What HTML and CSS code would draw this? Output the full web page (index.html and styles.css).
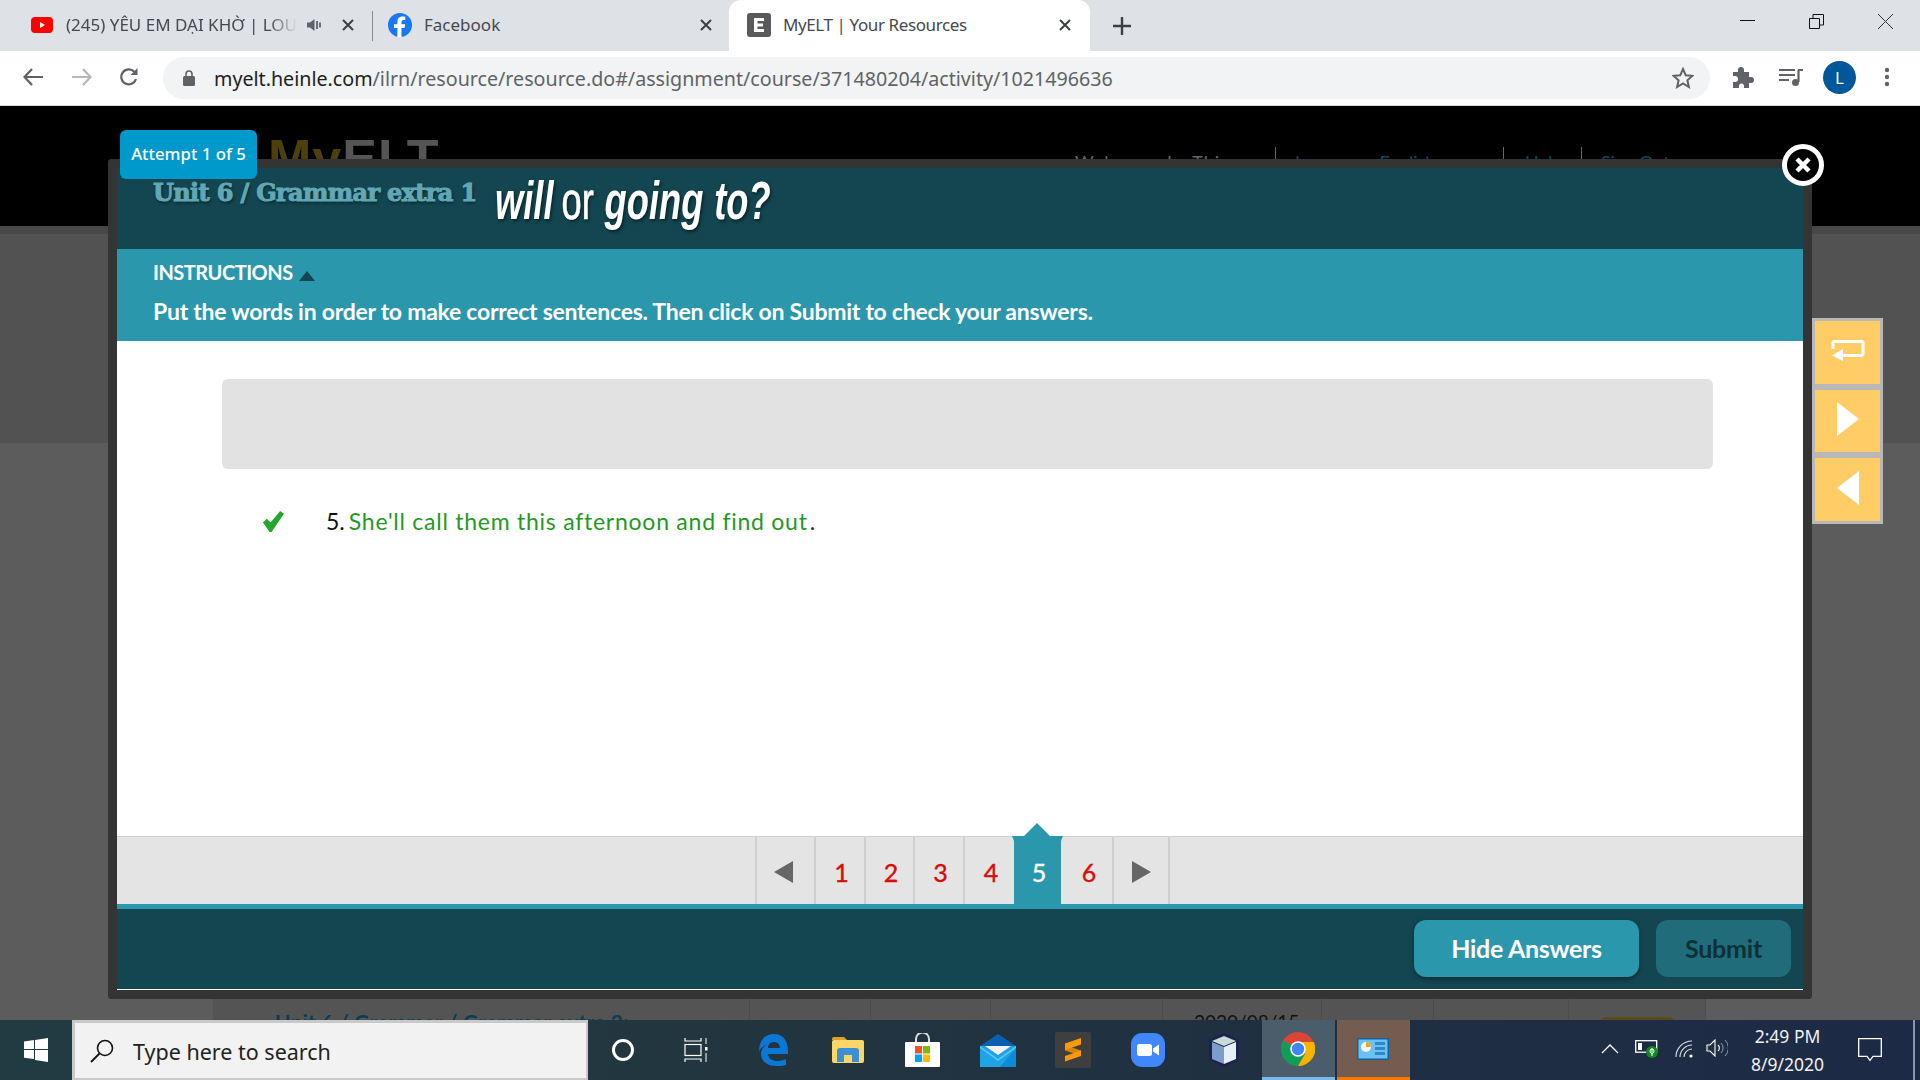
FILE: index.html
```html
<!DOCTYPE html>
<html lang="en">
<head>
<meta charset="utf-8">
<title>MyELT | Your Resources</title>
<link rel="stylesheet" href="styles.css">
</head>
<body>
<div class="tabstrip">
  <div class="tab tab-yt">
    <svg class="ic-yt" viewBox="0 0 22 16"><rect width="22" height="16" rx="4" fill="#f00"/><path d="M9 5l5 3-5 3z" fill="#fff"/></svg>
    <span class="tab-title fade">(245) YÊU EM DẠI KHỜ | LOU</span>
    <svg class="ic-speaker" viewBox="0 0 15 14"><path d="M0 4.5h3L7.500 1v12L3 9.500H0z" fill="#5f6368"/><path d="M10 3v8M13 4.500v5" stroke="#5f6368" stroke-width="1.800" fill="none"/></svg>
    <svg class="ic-x" viewBox="0 0 12 12"><path d="M1 1l10 10M11 1L1 11" stroke="#3c4043" stroke-width="2"/></svg>
  </div>
  <div class="tab tab-fb">
    <svg class="ic-fb" viewBox="0 0 32 32"><circle cx="16" cy="16" r="16" fill="#1877f2"/><path d="M18 32V20h4l1-5h-5v-3c0-1.500.8-2.700 2.800-2.700H23V5c-1-.2-2.400-.4-3.700-.4-4 0-6.800 2.500-6.800 6.800V15H8v5h4.500v12z" fill="#fff"/></svg>
    <span class="tab-title">Facebook</span>
    <svg class="ic-x" viewBox="0 0 12 12"><path d="M1 1l10 10M11 1L1 11" stroke="#3c4043" stroke-width="2"/></svg>
  </div>
  <div class="tab tab-active">
    <svg class="ic-e" viewBox="0 0 24 24"><rect width="24" height="24" rx="3" fill="#5a5a5a"/><path d="M7 5h10v3h-6.500v2.500H16v3h-5.500V16H17v3H7z" fill="#fff"/></svg>
    <span class="tab-title">MyELT | Your Resources</span>
    <svg class="ic-x" viewBox="0 0 12 12"><path d="M1 1l10 10M11 1L1 11" stroke="#3c4043" stroke-width="2"/></svg>
  </div>
  <svg class="ic-plus" viewBox="0 0 18 18"><path d="M9 0v18M0 9h18" stroke="#3c4043" stroke-width="2.400"/></svg>
  <div class="winctl">
    <svg class="wc-icon" viewBox="0 0 15 15"><path d="M0 6.500h15" stroke="#111" stroke-width="1"/></svg>
    <svg class="wc-icon" viewBox="0 0 15 15"><path d="M.5 4.500h10v10H.5zM4 4.500V.5h10.500V11h-4" fill="none" stroke="#111" stroke-width="1"/></svg>
    <svg class="wc-icon" viewBox="0 0 15 15"><path d="M0 0l15 15M15 0L0 15" stroke="#333" stroke-width="1"/></svg>
  </div>
</div>
<div class="toolbar">
  <svg class="nav-ic" viewBox="0 0 20 18"><path d="M20 9H2M9 1L1.500 9 9 17" fill="none" stroke="#5f6368" stroke-width="2.200"/></svg>
  <svg class="nav-ic" viewBox="0 0 20 18"><path d="M0 9h18M11 1l7.500 8-7.500 8" fill="none" stroke="#b5b7ba" stroke-width="2.200"/></svg>
  <svg class="nav-ic nav-reload" viewBox="0 0 20 20"><path d="M17 12a7.500 7.500 0 1 1-1.500-7" fill="none" stroke="#5f6368" stroke-width="2.200"/><path d="M18.500 1v7h-7z" fill="#5f6368"/></svg>
  <div class="omnibox">
    <svg class="ic-lock" viewBox="0 0 12 16"><rect y="6" width="12" height="10" rx="1.500" fill="#5f6368"/><path d="M3 7V4a3 3 0 0 1 6 0v3" fill="none" stroke="#5f6368" stroke-width="1.600"/></svg>
    <span class="url"><span class="url-host">myelt.heinle.com</span>/ilrn/resource/resource.do#/assignment/course/371480204/activity/1021496636</span>
    <svg class="ic-star" viewBox="0 0 22 22"><path d="M11 2l2.700 6.200 6.800.6-5.100 4.500 1.500 6.700L11 16.500 5.100 20l1.500-6.700L1.500 8.800l6.800-.6z" fill="none" stroke="#5f6368" stroke-width="2"/></svg>
  </div>
  <svg class="ic-puzzle" viewBox="0 0 22 22"><path d="M1 6h5V4a3 3 0 0 1 6 0v2h5v5h2a3 3 0 0 1 0 6h-2v5H12v-2a2.500 2.500 0 0 0-5 0v2H1v-6h2a3 3 0 0 0 0-6H1z" fill="#5f6368"/></svg>
  <svg class="ic-music" viewBox="0 0 24 20"><path d="M0 3h16M0 8h16M0 13h10" stroke="#5f6368" stroke-width="2"/><path d="M19.500 3v12" stroke="#5f6368" stroke-width="2.200"/><path d="M19 3h5" stroke="#5f6368" stroke-width="2"/><circle cx="16.500" cy="15.500" r="3.500" fill="#5f6368"/></svg>
  <div class="avatar">L</div>
  <svg class="ic-dots" viewBox="0 0 6 20"><circle cx="3" cy="3" r="2.200" fill="#5f6368"/><circle cx="3" cy="10" r="2.200" fill="#5f6368"/><circle cx="3" cy="17" r="2.200" fill="#5f6368"/></svg>
</div>

<div class="page">
  <header class="site-head">
    <div class="logo"><span class="logo-my">My</span><span class="logo-elt">ELT</span></div>
    <nav class="site-nav">
      <span class="nav-item nav-welcome">Welcome, Le Thi</span>
      <span class="nav-item nav-lang">Language: English ▾</span>
      <span class="nav-item nav-help">Help</span>
      <span class="nav-item nav-out">Sign Out</span>
    </nav>
  </header>
  <div class="band"></div>
  <div class="hero"></div>
  <div class="content">
    <div class="bg-table">
      <div class="bg-cell c1">Unit 6 / Grammar / Grammar extra 2:</div>
      <div class="bg-cell c2"></div>
      <div class="bg-cell c3"></div>
      <div class="bg-cell c4"></div>
      <div class="bg-cell c5">2020/08/15</div>
      <div class="bg-cell c6"></div>
      <div class="bg-cell c7"></div>
      <div class="bg-cell c8"><span class="bg-pill"></span></div>
    </div>
  </div>

  <div class="modal">
    <div class="m-head">
      <div class="m-unit">Unit 6 / Grammar extra 1</div>
      <div class="m-title"><em>will</em> <span class="m-or">or</span> <em>going to?</em></div>
    </div>
    <div class="m-instr">
      <div class="instr-label">INSTRUCTIONS <span class="instr-tri"></span></div>
      <div class="instr-text">Put the words in order to make correct sentences. Then click on Submit to check your answers.</div>
    </div>
    <div class="m-body">
      <div class="answer-box"></div>
      <div class="answer-row">
        <svg class="ic-check" viewBox="0 0 24 24"><path d="M2 13l4-4 4 4L20 1l4 3-13 19h-2z" fill="#22a82a"/></svg>
        <span class="a-num">5.</span><span class="a-text">She'll call them this afternoon and find out</span><span class="a-dot">.</span>
      </div>
    </div>
    <div class="m-nav">
      <div class="pager">
        <div class="pg"><span class="tri-l"></span></div>
        <div class="pg">1</div>
        <div class="pg">2</div>
        <div class="pg">3</div>
        <div class="pg">4</div>
        <div class="pg pg-on">5</div>
        <div class="pg pg-after">6</div>
        <div class="pg pg-last"><span class="tri-r"></span></div>
      </div>
    </div>
    <div class="m-foot">
      <button class="btn btn-hide">Hide Answers</button>
      <button class="btn btn-submit">Submit</button>
    </div>
  </div>

  <div class="badge">Attempt 1 of 5</div>
  <div class="close-btn"><svg viewBox="0 0 18 18"><path d="M3 3l12 12M15 3L3 15" stroke="#fff" stroke-width="4.500"/></svg></div>
  <div class="side">
    <div class="side-btn"><svg class="s-ret" viewBox="0 0 34 21"><path d="M2 9V3a1.500 1.500 0 0 1 1.500-1.500h27A1.500 1.500 0 0 1 32 3v11a1.500 1.500 0 0 1-1.500 1.500H8" fill="none" stroke="#fff" stroke-width="3"/><path d="M1 15.500l11-6.500v12z" fill="#fff"/></svg></div>
    <div class="side-btn"><svg class="s-arr" viewBox="0 0 22 34"><path d="M0 0l22 17L0 34z" fill="#fff"/></svg></div>
    <div class="side-btn"><svg class="s-arr" viewBox="0 0 22 34"><path d="M22 0L0 17l22 17z" fill="#fff"/></svg></div>
  </div>
</div>

<footer class="taskbar">
  <svg class="ic-win" viewBox="0 0 24 24"><path d="M0 3.500l10-1.400V11H0zM11 2l13-2v11H11zM0 12h10v9L0 19.800zM11 12h13v12l-13-2z" fill="#fff"/></svg>
  <div class="search">
    <svg class="ic-search" viewBox="0 0 24 24"><circle cx="15" cy="9" r="7.500" fill="none" stroke="#111" stroke-width="1.600"/><path d="M9.500 14.500L1 23" stroke="#111" stroke-width="1.800"/></svg>
    <span class="search-text">Type here to search</span>
  </div>
  <div class="cortana"></div>
  <svg class="ic-taskview" viewBox="0 0 24 24"><path d="M1 0v3h16V0M1 24v-3h16v3" fill="none" stroke="#fff" stroke-width="1.200"/><rect x="1" y="6.500" width="16" height="11" fill="none" stroke="#fff" stroke-width="1.200"/><rect x="21" y="9" width="2.500" height="3.500" fill="#fff"/><path d="M22 0v6M22 15v9" stroke="#fff" stroke-width="1"/></svg>

  <svg class="tb-app app-edge" viewBox="0 0 30 32"><path d="M1 17C1 7 7 0 16 0c9 0 14 7 14 17v3H10c.5 5 5 7 9 7 4 0 7-1 9-2v6c-3 1-6 1-10 1C8 32 3 26 3 20c0-4 2-7 5-9-3 1-5 3-7 6zM10 14h12c0-4-3-6-6-6-3 0-6 2-6 6z" fill="#0a78d4"/></svg>
  <svg class="tb-app app-folder" viewBox="0 0 32 26"><path d="M0 2a2 2 0 0 1 2-2h10l3 3h-15z" fill="#e0a31f"/><rect y="3" width="32" height="23" rx="2" fill="#fcd667"/><path d="M5 25V14a3 3 0 0 1 3-3h16a3 3 0 0 1 3 3v11h-7v-7h-8v7z" fill="#3a8fd6"/></svg>
  <svg class="tb-app app-store" viewBox="0 0 35 34"><path d="M11 10V6a6.500 6.500 0 0 1 13 0v4" fill="none" stroke="#ddd" stroke-width="2"/><rect y="9" width="35" height="25" rx="1" fill="#fff"/><rect x="10" y="13" width="7" height="7.500" fill="#f25022"/><rect x="18" y="13" width="7" height="7.500" fill="#7fba00"/><rect x="10" y="21.500" width="7" height="7.500" fill="#00a4ef"/><rect x="18" y="21.500" width="7" height="7.500" fill="#ffb900"/></svg>
  <svg class="tb-app app-mail" viewBox="0 0 36 33"><path d="M0 12L18 0l18 12z" fill="#0a5fb0"/><rect y="12" width="36" height="21" fill="#1fa2e6"/><path d="M5 12h26L18 21z" fill="#f2f2f2"/><path d="M0 12l18 13 18-13v2L18 27 0 14z" fill="#5cc6f2"/><path d="M36 14v19H20z" fill="#0f8ad8"/></svg>
  <svg class="tb-app app-sublime" viewBox="0 0 36 36"><rect width="36" height="36" rx="2" fill="#3f3f3f"/><path d="M10 13l16 5.500V24L10 18.500z" fill="#d9830a"/><path d="M26 6v6.500L10 18v-6.500zM26 18.500V24l-16 5.500V24z" fill="#f89a0a"/></svg>
  <svg class="tb-app app-zoom" viewBox="0 0 34 34"><rect width="34" height="34" rx="11" fill="#4087fc"/><rect x="6" y="11" width="15" height="12" rx="2.500" fill="#fff"/><path d="M22 15.500l6-4v11l-6-4z" fill="#fff"/></svg>
  <svg class="tb-app app-cube" viewBox="0 0 34 34"><path d="M17 0l15 7v20l-15 7-15-7V7z" fill="#1c2150"/><path d="M17 3l12 5-12 5L5 8z" fill="#c6dcd6"/><path d="M5 9l12 5v17L5 26z" fill="#7d9cc9"/><path d="M17 14l12-5v17l-12 5z" fill="#e6eff5"/></svg>
  <div class="tb-slot slot-chrome">
    <svg class="app-chrome" viewBox="0 0 34 34"><circle cx="17" cy="17" r="17" fill="#db4437"/><path d="M2.300 8.500A17 17 0 0 0 17 34l7-12-7-5z" fill="#0f9d58"/><path d="M17 10h15.800A17 17 0 0 1 17 34l7-12z" fill="#f4b400"/><circle cx="17" cy="17" r="7.800" fill="#fff"/><circle cx="17" cy="17" r="6.200" fill="#4285f4"/></svg>
  </div>
  <div class="tb-slot slot-ctrl">
    <svg class="app-ctrl" viewBox="0 0 32 22"><rect width="32" height="22" fill="#1b5f9e"/><rect x="1.500" y="1.500" width="29" height="19" fill="#6cc2ef"/><circle cx="9" cy="9" r="5" fill="#f5f5f5"/><path d="M9 9V4a5 5 0 0 1 5 5z" fill="#f4a51f"/><path d="M18 4h10v3H18zM18 9h10v3H18zM18 14h10v3H18z" fill="#2f86c8"/></svg>
  </div>

  <div class="tray">
    <svg class="t-caret" viewBox="0 0 18 10"><path d="M1 9l8-8 8 8" fill="none" stroke="#fff" stroke-width="1.300"/></svg>
    <svg class="t-batt" viewBox="0 0 24 18"><rect x=".7" y=".7" width="21" height="11.500" fill="none" stroke="#fff" stroke-width="1.300"/><rect x="3" y="3" width="4" height="7" fill="#fff"/><circle cx="17" cy="12" r="6" fill="#0f8a1e"/><path d="M17 8v8M15 11a2 2 0 0 1 4 0c0 2-2 3-2 3s-2-1-2-3z" fill="none" stroke="#fff" stroke-width="1"/></svg>
    <svg class="t-wifi" viewBox="0 0 18 18"><path d="M1 17A16 16 0 0 1 17 1M5 17A12 12 0 0 1 17 5M9 17a8 8 0 0 1 8-8" fill="none" stroke="#dfe3ea" stroke-width="1.100"/><circle cx="16" cy="16" r="1.600" fill="#fff"/></svg>
    <svg class="t-vol" viewBox="0 0 22 18"><path d="M1 6h3l5-5v16l-5-5H1z" fill="none" stroke="#fff" stroke-width="1.100"/><path d="M12 6a4 4 0 0 1 0 6" fill="none" stroke="#fff" stroke-width="1.100"/><path d="M15 4a7 7 0 0 1 0 10M19 1a11 11 0 0 1 0 16" fill="none" stroke="#99a0ae" stroke-width="1"/></svg>
    <div class="clock"><span>2:49 PM</span><span>8/9/2020</span></div>
    <svg class="t-notif" viewBox="0 0 24 24"><path d="M.7 .7h22.600v17.600H15l-3 4-3-4H.7z" fill="none" stroke="#fff" stroke-width="1.300"/></svg>
    <div class="t-show"></div>
  </div>
</footer>
</body>
</html>
```
FILE: styles.css
```css
* { box-sizing: border-box; }
html, body { margin: 0; padding: 0; width: 1920px; height: 1080px; overflow: hidden; }
body { display: flex; flex-direction: column; font-family: "Noto Sans", sans-serif; background: #000; }

/* browser tabs */
.tabstrip { height: 51px; flex: none; background: #dee1e6; display: flex; align-items: stretch; }
.tab { display: flex; align-items: center; flex: none; position: relative; padding-bottom: 1px; }
.tab-title { font-size: 17px; color: #45494e; white-space: nowrap; font-family: "Noto Sans", sans-serif; position: relative; top: -1px; }
.tab-yt { width: 373px; padding-left: 31px; }
.ic-yt { width: 22px; height: 16px; flex: none; margin-right: 13px; }
.fade { width: 231px; overflow: hidden; -webkit-mask-image: linear-gradient(to right, #000 88%, transparent 100%); mask-image: linear-gradient(to right, #000 88%, transparent 100%); }
.ic-speaker { width: 15px; height: 14px; flex: none; margin-left: 10px; }
.ic-x { width: 12px; height: 12px; flex: none; }
.tab-yt .ic-x { margin-left: 20px; }
.tab-yt::after { content: ""; position: absolute; right: 0; top: 11px; height: 30px; width: 1px; background: #888b90; }
.tab-fb { width: 356px; padding-left: 15px; }
.ic-fb { width: 24px; height: 24px; flex: none; margin-right: 12px; }
.tab-fb .ic-x { margin-left: auto; margin-right: 17px; }
.tab-active { width: 361px; padding-left: 18px; background: #fff; border-radius: 12px 12px 0 0; }
.tab-active .tab-title { letter-spacing: -.4px; }
.ic-e { width: 24px; height: 24px; flex: none; margin-right: 12px; }
.tab-active .ic-x { margin-left: auto; margin-right: 19px; }
.ic-plus { width: 18px; height: 18px; align-self: center; margin-left: 23px; flex: none; }
.winctl { margin-left: auto; display: flex; gap: 54px; padding: 14px 27px 0 0; }
.wc-icon { width: 15px; height: 15px; }

/* toolbar */
.toolbar { height: 55px; flex: none; background: #fff; border-bottom: 1px solid #dadce0; display: flex; align-items: center; padding: 0 0 2px 23px; position: relative; }
.nav-ic { width: 20px; height: 20px; flex: none; margin-right: 29px; }
.nav-reload { margin-left: -2px; }
.omnibox { margin-left: -5px; width: 1547px; height: 42px; margin-top: 2px; background: #f1f3f4; border-radius: 21px; display: flex; align-items: center; padding-left: 20px; flex: none; }
.ic-lock { width: 12px; height: 16px; flex: none; margin-right: 19px; }
.url { font-size: 19.660px; color: #5f6368; white-space: nowrap; }
.url-host { color: #202124; }
.ic-star { width: 22px; height: 22px; margin-left: auto; margin-right: 16px; flex: none; }
.ic-puzzle { width: 22px; height: 22px; flex: none; margin-left: 22px; }
.ic-music { width: 24px; height: 20px; flex: none; margin-left: 25px; }
.avatar { width: 33px; height: 33px; border-radius: 50%; background: #01579b; color: #fff; font-size: 17px; display: flex; align-items: center; justify-content: center; margin-left: 20px; flex: none; }
.ic-dots { width: 6px; height: 20px; flex: none; margin-left: 28px; }

/* dimmed page */
.page { flex: 1; position: relative; overflow: hidden; display: flex; flex-direction: column; background: #5c5c5c; font-family: "Lato", sans-serif; }
.site-head { height: 120px; flex: none; background: #000; display: flex; align-items: flex-start; }
.logo { font: bold 52px/1 "Liberation Sans", sans-serif; margin: 26px 0 0 268px; letter-spacing: 1px; }
.logo-my { color: #4d400c; }
.logo-elt { color: #555; }
.site-nav { margin-left: auto; padding: 41px 245px 0 0; display: flex; font-size: 18px; line-height: 30px; color: #666; }
.nav-item { white-space: nowrap; flex: none; height: 30px; }
.nav-welcome { width: 201px; border-right: 1px solid #666; letter-spacing: 1px; }
.nav-lang { width: 228px; padding-left: 19px; color: #0b4a66; border-right: 1px solid #666; }
.nav-help { width: 78px; padding-left: 21px; color: #0b4a66; border-right: 1px solid #666; }
.nav-out { width: 93px; padding-left: 19px; color: #0b4a66; }
.band { height: 8px; flex: none; background: #484848; }
.hero { height: 209px; flex: none; background: #525252; }
.content { flex: 1; display: flex; flex-direction: column; justify-content: flex-end; padding-left: 213px; }
.bg-table { width: 1493px; height: 21px; display: flex; background: #545454; flex: none; }
.bg-cell { border-right: 1px solid #4c4c4c; height: 21px; padding-top: 10px; white-space: nowrap; flex: none; }
.c1 { width: 537px; padding-left: 62px; color: #0b3c55; font: bold 21px/26px "Lato", sans-serif; letter-spacing: .2px; }
.c2 { width: 121px; }
.c3 { width: 120px; }
.c4 { width: 172px; }
.c5 { width: 159px; padding-left: 31px; color: #111; font: 400 19px/26px "Lato", sans-serif; }
.c6 { width: 112px; }
.c7 { width: 135px; }
.c8 { width: 137px; border-right: 1px solid #4c4c4c; padding-top: 18px; padding-left: 31px; }
.bg-pill { display: block; width: 75px; height: 10px; background: #5a4a1a; border-radius: 6px 6px 0 0; }

/* modal */
.modal { position: absolute; left: 108px; top: 53px; width: 1704px; height: 840px; border: 9px solid #343434; border-radius: 3px; display: flex; flex-direction: column; background: #fff; }
.m-head { height: 81px; flex: none; background: #134650; display: flex; align-items: flex-start; padding-left: 36px; }
.m-unit { font: bold 24px/30px "DejaVu Serif", serif; color: #62a7b5; margin-top: 10px; letter-spacing: -.65px; -webkit-text-stroke: 1px #62a7b5; text-shadow: 1px 2px 3px rgba(0,0,0,.5); white-space: nowrap; width: 342px; flex: none; }
.m-title { font: 400 53px/60px "Liberation Sans", sans-serif; color: #fff; transform: scaleX(.685); transform-origin: left top; white-space: nowrap; margin-top: 3px; text-shadow: 2px 2px 4px rgba(0,0,0,.5); word-spacing: 1px; }
.m-title em { font-weight: 700; }
.m-or { -webkit-text-stroke: .6px #fff; margin-left: -4px; }
.m-instr { height: 92px; flex: none; background: #2b97ac; color: #fff; padding: 10px 0 0 36px; font-family: "Lato", sans-serif; font-weight: 700; }
.instr-label { font-size: 20px; line-height: 26px; letter-spacing: -.5px; display: flex; align-items: center; gap: 6px; }
.instr-tri { width: 0; height: 0; border-left: 8px solid transparent; border-right: 8px solid transparent; border-bottom: 10px solid #134650; margin-top: 8px; }
.instr-text { font-size: 23px; line-height: 28px; margin-top: 12px; letter-spacing: -.26px; white-space: nowrap; }
.m-body { flex: 1; display: flex; flex-direction: column; padding: 38px 90px 0 105px; background: #fff; }
.answer-box { height: 90px; flex: none; background: #e2e2e2; border-radius: 6px; }
.answer-row { display: flex; align-items: center; padding-left: 39px; margin-top: 37px; height: 30px; font: 23px/30px "Lato", sans-serif; }
.ic-check { width: 23px; height: 23px; flex: none; margin-right: 42px; }
.a-num { color: #111; margin-right: 4px; }
.a-text { color: #1f9a1f; letter-spacing: .75px; }
.a-dot { color: #333; margin-left: 2px; }

.m-nav { height: 73px; flex: none; background: #e4e4e4; border-top: 1px solid #d0d0d0; border-bottom: 5px solid #2b97ac; padding-left: 638px; }
.pager { display: grid; grid-template-columns: 59px 50px 49px 50px 51px 47px 51px 58px; height: 100%; }
.pg { border-left: 2px solid #cfcfcf; color: #d90d0d; font: 400 25px/1 "Lato", sans-serif; -webkit-text-stroke: .4px currentColor; display: flex; align-items: center; justify-content: center; position: relative; padding: 4px 0 0 3px; }
.pg-on { background: #2b97ac; color: #fff; border-left: 0; }
.pg-on::before { content: ""; position: absolute; left: -2px; top: -14px; width: 51px; height: 18px; background: #2b97ac; clip-path: polygon(25px 0, 38px 13px, 51px 13px, 49px 18px, 2px 18px, 0 13px, 12px 13px); }
.pg-after { border-left: 0; padding-left: 5px; }
.pg-last { border-right: 2px solid #cfcfcf; padding: 2px 0 0; }
.pg:first-child { padding: 2px 5px 0 0; }
.tri-l, .tri-r { width: 0; height: 0; border-top: 11px solid transparent; border-bottom: 11px solid transparent; }
.tri-l { border-right: 19px solid #666; }
.tri-r { border-left: 19px solid #666; }

.m-foot { height: 81px; flex: none; background: #134650; border-bottom: 1px solid #fff; display: flex; align-items: flex-start; justify-content: flex-end; gap: 17px; padding: 11px 12px 0 0; }
.btn { height: 57px; border: 0; border-radius: 12px; font: 700 25px/1 "Lato", sans-serif; padding: 0; }
.btn-hide { width: 225px; background: #2b97ac; color: #fff; box-shadow: 0 2px 4px rgba(0,0,0,.35); letter-spacing: -.3px; }
.btn-submit { width: 135px; background: #216c7b; color: #0d3039; letter-spacing: -.2px; }

.badge { position: absolute; left: 120px; top: 24px; width: 137px; height: 49px; background: #0099cc; color: #fff; border-radius: 6px; font: 500 16.800px/47px "Noto Sans", sans-serif; text-align: center; white-space: nowrap; }
.close-btn { position: absolute; left: 1782px; top: 38px; width: 42px; height: 42px; border-radius: 50%; background: #000; border: 5px solid #fff; display: flex; align-items: center; justify-content: center; }
.close-btn svg { width: 18px; height: 18px; }
.side { position: absolute; left: 1812px; top: 212px; width: 71px; height: 206px; background: #b8b8b8; padding: 3px; display: flex; flex-direction: column; gap: 6px; }
.side-btn { flex: 1; background: #ffcc66; display: flex; align-items: center; justify-content: center; padding-bottom: 4px; }
.s-ret { width: 34px; height: 21px; }
.s-arr { width: 22px; height: 34px; }

/* taskbar */
.taskbar { height: 60px; flex: none; background: linear-gradient(to right, #213b43 0, #22363f 700px, #1f2f42 1300px, #1d2a46 100%); display: flex; align-items: center; position: relative; padding-left: 24px; }
.ic-win { width: 24px; height: 24px; flex: none; }
.search { width: 516px; height: 60px; flex: none; margin-left: 24px; background: #f2f2f2; border: 3px solid #c9c9c9; border-bottom-width: 2px; border-right-width: 2px; display: flex; align-items: center; padding-left: 15px; }
.ic-search { width: 24px; height: 24px; flex: none; margin-right: 19px; }
.search-text { font: 21.500px/1 "Noto Sans", sans-serif; color: #222; position: relative; top: 1px; }
.cortana { width: 22px; height: 22px; border: 3px solid #fff; border-radius: 50%; flex: none; margin-left: 24px; }
.ic-taskview { width: 24px; height: 24px; flex: none; margin-left: 50px; }
.tb-app { flex: none; }
.app-edge { width: 30px; height: 32px; margin-left: 50px; }
.app-folder { width: 32px; height: 26px; margin-left: 44px; }
.app-store { width: 35px; height: 34px; margin-left: 41px; }
.app-mail { width: 36px; height: 33px; margin-left: 40px; }
.app-sublime { width: 36px; height: 36px; margin-left: 39px; }
.app-zoom { width: 34px; height: 34px; margin-left: 40px; }
.app-cube { width: 34px; height: 34px; margin-left: 42px; }
.tb-slot { width: 73px; height: 60px; flex: none; display: flex; align-items: center; justify-content: center; border-bottom: 3px solid; }
.slot-chrome { margin-left: 21px; background: #4b5c6b; border-bottom-color: #76b9ed; }
.slot-ctrl { margin-left: 2px; background: #745c50; border-bottom-color: #f77800; }
.app-chrome { width: 34px; height: 34px; margin-left: -2px; }
.app-ctrl { width: 32px; height: 22px; margin-left: -2px; }
.tray { margin-left: auto; display: flex; align-items: center; height: 60px; position: relative; }
.t-caret { width: 18px; height: 10px; flex: none; margin-right: 16px; margin-bottom: 2px; }
.t-batt { width: 24px; height: 18px; flex: none; margin-right: 16px; margin-bottom: 2px; }
.t-wifi { width: 18px; height: 18px; flex: none; margin-right: 13px; margin-bottom: 2px; }
.t-vol { width: 22px; height: 18px; flex: none; margin-bottom: 4px; }
.clock { width: 115px; margin-left: 2px; display: flex; flex-direction: column; align-items: center; gap: 6px; color: #f0f2f5; font: 17.500px/22px "Noto Sans", sans-serif; }
.t-notif { width: 24px; height: 24px; flex: none; margin-left: 13px; }
.t-show { width: 2px; height: 60px; background: #8d96a8; margin-left: 31px; margin-right: 5px; flex: none; }
```
